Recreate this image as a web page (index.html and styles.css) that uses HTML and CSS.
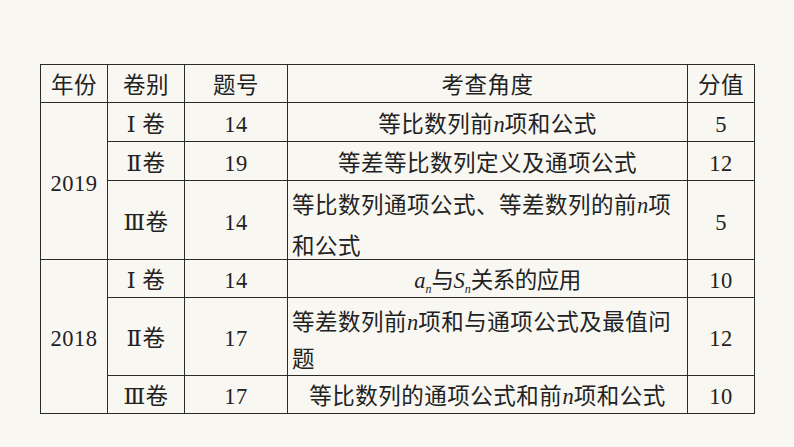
FILE: index.html
```html
<!DOCTYPE html>
<html lang="zh-CN">
<head>
<meta charset="utf-8">
<link rel="stylesheet" href="styles.css">
</head>
<body>
<div class="page">
  <table class="grid">
    <colgroup>
      <col class="c-year"><col class="c-paper"><col class="c-num"><col class="c-topic"><col class="c-score">
    </colgroup>
    <tr class="h38">
      <th>年份</th><th>卷别</th><th>题号</th><th>考查角度</th><th>分值</th>
    </tr>
    <tr class="h39">
      <td rowspan="3">2019</td><td class="paper">Ⅰ 卷</td><td>14</td><td>等比数列前<i>n</i>项和公式</td><td>5</td>
    </tr>
    <tr class="h39">
      <td class="paper">Ⅱ卷</td><td>19</td><td>等差等比数列定义及通项公式</td><td>12</td>
    </tr>
    <tr class="h79">
      <td class="paper">Ⅲ卷</td><td>14</td><td class="wrap"><div class="lines"><span class="l1">等比数列通项公式、等差数列的前<i>n</i>项</span><span class="l2 gap3">和公式</span></div></td><td>5</td>
    </tr>
    <tr class="h38">
      <td rowspan="3">2018</td><td class="paper">Ⅰ 卷</td><td>14</td><td class="math"><i>a</i><sub><i>n</i></sub>与<i>S</i><sub><i>n</i></sub>关系的应用</td><td>10</td>
    </tr>
    <tr class="h78">
      <td class="paper">Ⅱ卷</td><td>17</td><td class="wrap"><div class="lines"><span class="l1">等差数列前<i>n</i>项和与通项公式及最值问</span><span class="l2 gapm1">题</span></div></td><td>12</td>
    </tr>
    <tr class="h38">
      <td class="paper">Ⅲ卷</td><td>17</td><td>等比数列的通项公式和前<i>n</i>项和公式</td><td>10</td>
    </tr>
  </table>
</div>
</body>
</html>
```

FILE: styles.css
```css
html, body {
  margin: 0;
  padding: 0;
  background: #f9f7f2;
}
.page {
  padding: 64px 0 0 40px;
}
.grid {
  border-collapse: collapse;
  table-layout: fixed;
  width: 715px;
  font-family: "Liberation Serif", "Noto Sans CJK SC", serif;
  font-size: 22.5px;
  letter-spacing: 0.5px;
  color: #222;
  border: 1.5px solid #555;
}
.c-year { width: 67px; }
.c-paper { width: 77px; }
.c-num { width: 103px; }
.c-topic { width: 400px; }
.c-score { width: 67px; }
.grid th, .grid td {
  border: 1px solid #2a2a2a;
  text-align: center;
  vertical-align: middle;
  padding: 5px 0 0;
  font-weight: normal;
  line-height: 32px;
  white-space: nowrap;
}
.grid td.wrap {
  text-align: left;
  vertical-align: top;
  padding: 6px 0 0 4px;
}
.grid td.math {
  padding-left: 20px;
  letter-spacing: -0.5px;
}
.lines {
  height: 70px;
}
.lines span {
  display: block;
  line-height: 38px;
}
.lines .gap3 { margin-top: 3px; }
.lines .gapm1 { margin-top: -1px; }
.grid i {
  font-family: "Liberation Serif", serif;
  font-style: italic;
  letter-spacing: 0;
}
.grid sub {
  font-size: 12px;
  line-height: 0;
  vertical-align: -5px;
}
.h38 { height: 38px; }
.h39 { height: 39px; }
.h78 { height: 78px; }
.h79 { height: 79px; }
.paper {
  font-family: "Liberation Serif", "DejaVu Serif", "Noto Sans CJK SC", serif;
}
```
